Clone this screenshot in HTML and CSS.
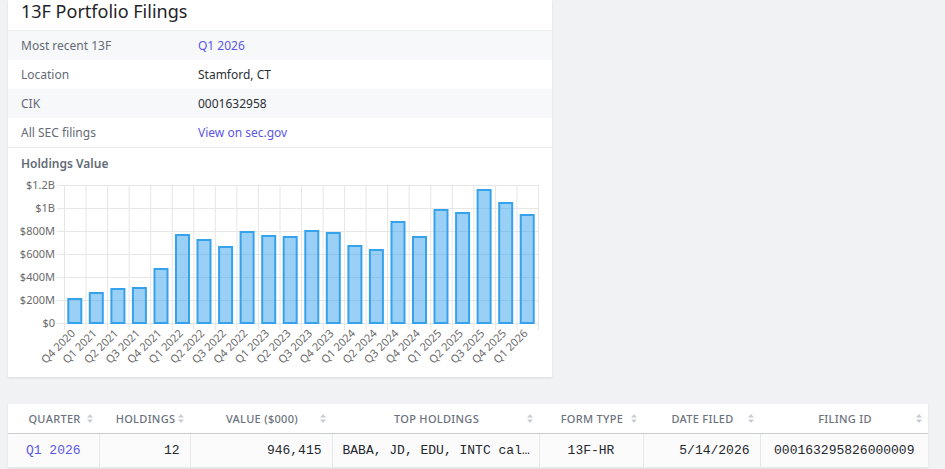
FILE: index.html
```html
<!DOCTYPE html>
<html>
<head>
<meta charset="utf-8">
<link rel="stylesheet" href="styles.css">
</head>
<body>
<div class="page">
  <section class="card">
    <h2 class="card-title">13F Portfolio Filings</h2>
    <div class="info">
      <div class="info-row shaded"><span class="lbl">Most recent 13F</span><a class="link" href="#">Q1 2026</a></div>
      <div class="info-row"><span class="lbl">Location</span><span class="val">Stamford, CT</span></div>
      <div class="info-row shaded"><span class="lbl">CIK</span><span class="val">0001632958</span></div>
      <div class="info-row"><span class="lbl">All SEC filings</span><a class="link" href="#">View on sec.gov</a></div>
    </div>
    <div class="chart">
      <div class="chart-title">Holdings Value</div>
      <svg class="chart-svg" width="544" height="198" viewBox="0 0 544 198">
        <g class="grid" stroke="#e6e6e6" stroke-width="1">
          <line x1="49" y1="13.5" x2="530" y2="13.5"/>
          <line x1="49" y1="36.5" x2="530" y2="36.5"/>
          <line x1="49" y1="59.5" x2="530" y2="59.5"/>
          <line x1="49" y1="82.5" x2="530" y2="82.5"/>
          <line x1="49" y1="105.5" x2="530" y2="105.5"/>
          <line x1="49" y1="128.5" x2="530" y2="128.5"/>
          <line x1="49" y1="151.5" x2="530" y2="151.5"/>
          <line x1="56.5" y1="13" x2="56.5" y2="158"/>
          <line x1="78" y1="13" x2="78" y2="158"/>
          <line x1="99.6" y1="13" x2="99.6" y2="158"/>
          <line x1="121.1" y1="13" x2="121.1" y2="158"/>
          <line x1="142.7" y1="13" x2="142.7" y2="158"/>
          <line x1="164.2" y1="13" x2="164.2" y2="158"/>
          <line x1="185.8" y1="13" x2="185.8" y2="158"/>
          <line x1="207.3" y1="13" x2="207.3" y2="158"/>
          <line x1="228.9" y1="13" x2="228.9" y2="158"/>
          <line x1="250.4" y1="13" x2="250.4" y2="158"/>
          <line x1="272" y1="13" x2="272" y2="158"/>
          <line x1="293.5" y1="13" x2="293.5" y2="158"/>
          <line x1="315.1" y1="13" x2="315.1" y2="158"/>
          <line x1="336.6" y1="13" x2="336.6" y2="158"/>
          <line x1="358.1" y1="13" x2="358.1" y2="158"/>
          <line x1="379.7" y1="13" x2="379.7" y2="158"/>
          <line x1="401.2" y1="13" x2="401.2" y2="158"/>
          <line x1="422.8" y1="13" x2="422.8" y2="158"/>
          <line x1="444.3" y1="13" x2="444.3" y2="158"/>
          <line x1="465.9" y1="13" x2="465.9" y2="158"/>
          <line x1="487.4" y1="13" x2="487.4" y2="158"/>
          <line x1="509" y1="13" x2="509" y2="158"/>
          <line x1="530.5" y1="13" x2="530.5" y2="158"/>
        </g>
        <g class="ylabels" text-anchor="end">
          <text x="47" y="17">$1.2B</text>
          <text x="47" y="40">$1B</text>
          <text x="47" y="63">$800M</text>
          <text x="47" y="86">$600M</text>
          <text x="47" y="109">$400M</text>
          <text x="47" y="132">$200M</text>
          <text x="47" y="155">$0</text>
        </g>
        <g class="bars" fill="rgba(54,162,235,0.5)" stroke="#36a2eb" stroke-width="2">
          <rect x="60.3" y="127" width="13" height="24"/>
          <rect x="81.8" y="121" width="13" height="30"/>
          <rect x="103.4" y="117" width="13" height="34"/>
          <rect x="124.9" y="116" width="13" height="35"/>
          <rect x="146.5" y="97" width="13" height="54"/>
          <rect x="168" y="63" width="13" height="88"/>
          <rect x="189.5" y="68" width="13" height="83"/>
          <rect x="211.1" y="75" width="13" height="76"/>
          <rect x="232.6" y="60" width="13" height="91"/>
          <rect x="254.2" y="64" width="13" height="87"/>
          <rect x="275.7" y="65" width="13" height="86"/>
          <rect x="297.3" y="59" width="13" height="92"/>
          <rect x="318.8" y="61" width="13" height="90"/>
          <rect x="340.4" y="74" width="13" height="77"/>
          <rect x="361.9" y="78" width="13" height="73"/>
          <rect x="383.5" y="50" width="13" height="101"/>
          <rect x="405" y="65" width="13" height="86"/>
          <rect x="426.5" y="38" width="13" height="113"/>
          <rect x="448.1" y="41" width="13" height="110"/>
          <rect x="469.6" y="18" width="13" height="133"/>
          <rect x="491.2" y="31" width="13" height="120"/>
          <rect x="512.7" y="43" width="13" height="108"/>
        </g>
        <g class="xlabels" text-anchor="end">
          <text x="68" y="162" transform="rotate(-45 68 162)">Q4 2020</text>
          <text x="89.5" y="162" transform="rotate(-45 89.5 162)">Q1 2021</text>
          <text x="111" y="162" transform="rotate(-45 111 162)">Q2 2021</text>
          <text x="132.6" y="162" transform="rotate(-45 132.6 162)">Q3 2021</text>
          <text x="154.1" y="162" transform="rotate(-45 154.1 162)">Q4 2021</text>
          <text x="175.7" y="162" transform="rotate(-45 175.7 162)">Q1 2022</text>
          <text x="197.2" y="162" transform="rotate(-45 197.2 162)">Q2 2022</text>
          <text x="218.8" y="162" transform="rotate(-45 218.8 162)">Q3 2022</text>
          <text x="240.3" y="162" transform="rotate(-45 240.3 162)">Q4 2022</text>
          <text x="261.9" y="162" transform="rotate(-45 261.9 162)">Q1 2023</text>
          <text x="283.4" y="162" transform="rotate(-45 283.4 162)">Q2 2023</text>
          <text x="305" y="162" transform="rotate(-45 305 162)">Q3 2023</text>
          <text x="326.5" y="162" transform="rotate(-45 326.5 162)">Q4 2023</text>
          <text x="348" y="162" transform="rotate(-45 348 162)">Q1 2024</text>
          <text x="369.6" y="162" transform="rotate(-45 369.6 162)">Q2 2024</text>
          <text x="391.1" y="162" transform="rotate(-45 391.1 162)">Q3 2024</text>
          <text x="412.7" y="162" transform="rotate(-45 412.7 162)">Q4 2024</text>
          <text x="434.2" y="162" transform="rotate(-45 434.2 162)">Q1 2025</text>
          <text x="455.8" y="162" transform="rotate(-45 455.8 162)">Q2 2025</text>
          <text x="477.3" y="162" transform="rotate(-45 477.3 162)">Q3 2025</text>
          <text x="498.9" y="162" transform="rotate(-45 498.9 162)">Q4 2025</text>
          <text x="520.4" y="162" transform="rotate(-45 520.4 162)">Q1 2026</text>
        </g>
      </svg>
    </div>
  </section>

  <section class="table-card">
    <table class="filings">
      <colgroup>
        <col class="c-q"><col class="c-h"><col class="c-v"><col class="c-t"><col class="c-f"><col class="c-d"><col class="c-i">
      </colgroup>
      <thead>
        <tr>
          <th><div class="th-in"><span class="th-lbl">Quarter</span><svg class="sort" width="6" height="9" viewBox="0 0 6 9"><path d="M3 0 L6 3.5 H0 Z M3 9 L6 5.5 H0 Z"/></svg></div></th>
          <th><div class="th-in"><span class="th-lbl">Holdings</span><svg class="sort" width="6" height="9" viewBox="0 0 6 9"><path d="M3 0 L6 3.5 H0 Z M3 9 L6 5.5 H0 Z"/></svg></div></th>
          <th><div class="th-in"><span class="th-lbl">Value ($000)</span><svg class="sort" width="6" height="9" viewBox="0 0 6 9"><path d="M3 0 L6 3.5 H0 Z M3 9 L6 5.5 H0 Z"/></svg></div></th>
          <th><div class="th-in"><span class="th-lbl">Top Holdings</span><svg class="sort" width="6" height="9" viewBox="0 0 6 9"><path d="M3 0 L6 3.5 H0 Z M3 9 L6 5.5 H0 Z"/></svg></div></th>
          <th><div class="th-in"><span class="th-lbl">Form Type</span><svg class="sort" width="6" height="9" viewBox="0 0 6 9"><path d="M3 0 L6 3.5 H0 Z M3 9 L6 5.5 H0 Z"/></svg></div></th>
          <th><div class="th-in"><span class="th-lbl">Date Filed</span><svg class="sort" width="6" height="9" viewBox="0 0 6 9"><path d="M3 0 L6 3.5 H0 Z M3 9 L6 5.5 H0 Z"/></svg></div></th>
          <th><div class="th-in"><span class="th-lbl">Filing ID</span><svg class="sort" width="6" height="9" viewBox="0 0 6 9"><path d="M3 0 L6 3.5 H0 Z M3 9 L6 5.5 H0 Z"/></svg></div></th>
        </tr>
      </thead>
      <tbody>
        <tr>
          <td class="center"><a class="link" href="#">Q1 2026</a></td>
          <td class="right">12</td>
          <td class="right">946,415</td>
          <td class="left tight"><div class="ellip">BABA, JD, EDU, INTC calls</div></td>
          <td class="center">13F-HR</td>
          <td class="right">5/14/2026</td>
          <td class="center">000163295826000009</td>
        </tr>
      </tbody>
    </table>
  </section>
</div>
</body>
</html>
```

FILE: styles.css
```css
* { box-sizing: border-box; }
html, body { margin: 0; padding: 0; }
body {
  background: #f1f2f4;
  font-family: "Noto Sans", "Liberation Sans", sans-serif;
  color: #2b2f36;
  width: 945px;
  height: 469px;
  overflow: hidden;
}
.page { padding: 0 8px; }

.card {
  width: 544px;
  background: #fff;
  box-shadow: 0 1px 2px rgba(0,0,0,0.10);
}
.card-title {
  margin: 0;
  height: 31px;
  padding: 0 13px;
  font-size: 18px;
  font-weight: 400;
  line-height: 23px;
  color: #1f2328;
  border-bottom: 1px solid #eceef1;
}
.info-row {
  display: grid;
  grid-template-columns: 177px 1fr;
  height: 29px;
  align-items: center;
  padding: 0 13px;
  font-size: 12px;
}
.info-row.shaded { background: #f7f8f9; }
.info { border-bottom: 1px solid #e6e8eb; }
.lbl { color: #646b76; }
.val { color: #2b2f36; }
.link { color: #5a57e6; text-decoration: none; }

.chart { padding: 7px 0 7px; }
.chart-title {
  padding: 0 13px;
  font-size: 12px;
  font-weight: 600;
  line-height: 17px;
  color: #646b76;
}
.chart-svg { display: block; }
.ylabels text, .xlabels text {
  font-family: "Noto Sans", "Liberation Sans", sans-serif;
  font-size: 11px;
  fill: #6a6a6a;
}

.table-card {
  margin-top: 27px;
  width: 920px;
  background: #fff;
  box-shadow: 0 1px 2px rgba(0,0,0,0.08);
}
.filings {
  width: 920px;
  table-layout: fixed;
  border-collapse: collapse;
}
.c-q { width: 91px; }
.c-h { width: 91px; }
.c-v { width: 142px; }
.c-t { width: 207px; }
.c-f { width: 104px; }
.c-d { width: 117px; }
.c-i { width: 168px; }
.filings th {
  height: 29px;
  padding: 0 6px 0 8px;
  border-bottom: 1px solid #c9cdd3;
  font-size: 11px;
  font-weight: 500;
  text-transform: uppercase;
  color: #6b727d;
  letter-spacing: 0.3px;
}
.th-in {
  display: grid;
  grid-template-columns: 1fr auto 1fr;
  align-items: center;
}
.th-lbl { grid-column: 2; white-space: nowrap; }
.sort { grid-column: 3; justify-self: end; fill: #c8ccd2; }
.filings td {
  height: 34px;
  padding: 0 10px;
  background: #fbfbfc;
  border-right: 1px solid #e6e8eb;
  border-bottom: 1px solid #e6e8eb;
  font-family: "Liberation Mono", "DejaVu Sans Mono", monospace;
  font-size: 13px;
  color: #24272c;
}
.filings td:last-child { border-right: none; }
.filings td.tight { padding: 0 4px 0 10px; }
.center { text-align: center; }
.right { text-align: right; }
.left { text-align: left; }
.ellip { width: 189px; white-space: nowrap; overflow: hidden; text-overflow: ellipsis; }
```
